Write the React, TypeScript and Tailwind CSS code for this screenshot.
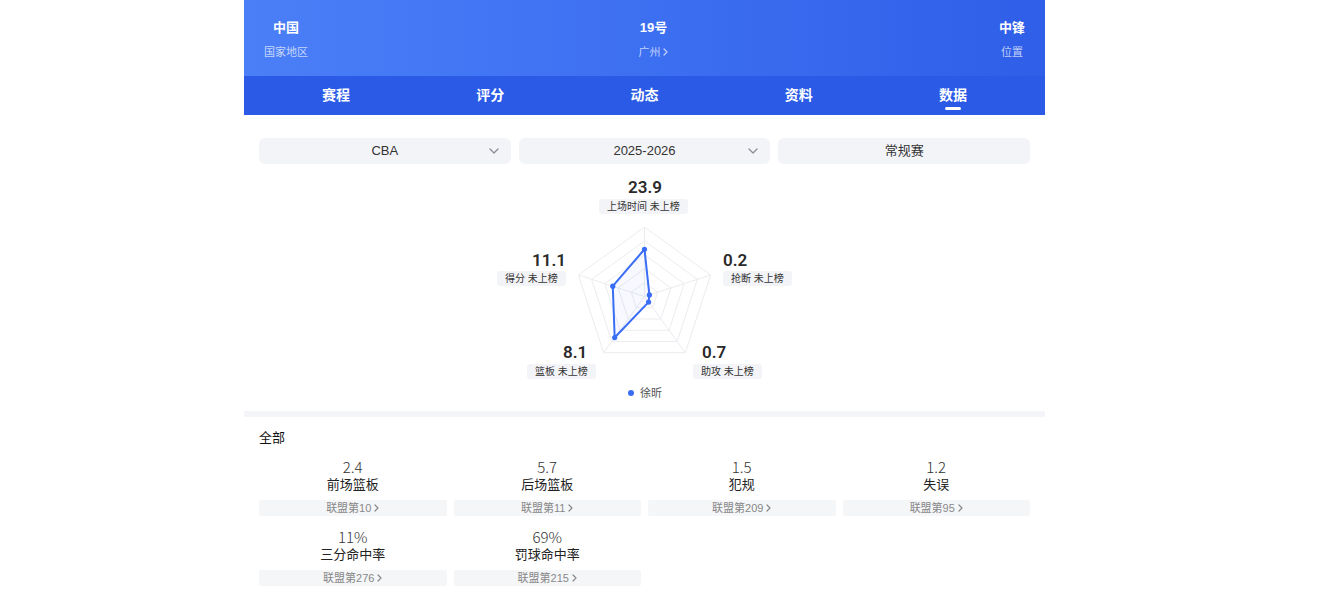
import React from "react";

const CX = 400.5;
const CY = 132.5;
const R = 69.5;

const vertex = (i: number, f: number): [number, number] => {
  const a = ((-90 + 72 * i) * Math.PI) / 180;
  return [CX + R * f * Math.cos(a), CY + R * f * Math.sin(a)];
};

const poly = (fs: number[]) => fs.map((f, i) => vertex(i, f).map((v) => v.toFixed(2)).join(",")).join(" ");

// share of each axis: 上场时间, 抢断, 助攻, 篮板, 得分
const player = [0.68, 0.074, 0.1, 0.73, 0.48];

const tabs = ["赛程", "评分", "动态", "资料", "数据"];

const stats = [
  { v: "2.4", n: "前场篮板", r: "联盟第10" },
  { v: "5.7", n: "后场篮板", r: "联盟第11" },
  { v: "1.5", n: "犯规", r: "联盟第209" },
  { v: "1.2", n: "失误", r: "联盟第95" },
  { v: "11%", n: "三分命中率", r: "联盟第276" },
  { v: "69%", n: "罚球命中率", r: "联盟第215" },
];

function Chevron() {
  return (
    <svg width="10" height="6" viewBox="0 0 10 6" className="absolute right-[12px] top-1/2 -translate-y-1/2">
      <path d="M1 1l4 4 4-4" fill="none" stroke="#8a8d96" strokeWidth="1.3" strokeLinecap="round" strokeLinejoin="round" />
    </svg>
  );
}

function Small() {
  return (
    <svg width="5" height="8" viewBox="0 0 5 8" className="ml-[3px]">
      <path d="M1 1l3 3-3 3" fill="none" stroke="currentColor" strokeWidth="1.2" strokeLinecap="round" strokeLinejoin="round" />
    </svg>
  );
}

function Tag({ text, className }: { text: string; className: string }) {
  return (
    <div className={`absolute h-[15px] px-2 rounded-[3px] bg-[#f3f4f8] text-[10px] leading-[15px] text-[#333] whitespace-nowrap ${className}`}>
      {text}
    </div>
  );
}

function Val({ text, className }: { text: string; className: string }) {
  return (
    <div className={`absolute text-[17px] leading-[17px] font-semibold text-[#2a2a2a] font-['Roboto',sans-serif] ${className}`}>
      {text}
    </div>
  );
}

export default function App() {
  return (
    <div className="min-h-[600px] bg-white font-['Liberation_Sans','Noto_Sans_CJK_SC',sans-serif]">
      <div className="w-[801px] ml-[244px]">
        {/* profile header */}
        <div className="h-[76px] px-5 flex justify-between bg-linear-to-r from-[#4b7ff7] via-[#3d6ff1] to-[#2f5ee8] text-white">
          <div className="flex flex-col items-center pt-[19px]">
            <div className="text-[13px] leading-[18px] font-bold">中国</div>
            <div className="mt-[7px] text-[11px] leading-[16px] text-white/70">国家地区</div>
          </div>
          <div className="flex flex-col items-center pt-[19px]">
            <div className="text-[13px] leading-[18px] font-bold">19号</div>
            <div className="mt-[7px] text-[11px] leading-[16px] text-white/70 flex items-center">
              广州
              <Small />
            </div>
          </div>
          <div className="flex flex-col items-center pt-[19px]">
            <div className="text-[13px] leading-[18px] font-bold">中锋</div>
            <div className="mt-[7px] text-[11px] leading-[16px] text-white/70">位置</div>
          </div>
        </div>

        {/* tabs */}
        <div className="h-[39px] px-[15px] grid grid-cols-5 bg-[#2b5be6]">
          {tabs.map((t, i) => (
            <div key={t} className="relative flex items-center justify-center text-[14px] font-bold text-white">
              {t}
              {i === 4 && <div className="absolute bottom-[5px] left-1/2 -translate-x-1/2 w-4 h-[3px] rounded-full bg-white" />}
            </div>
          ))}
        </div>

        {/* filters */}
        <div className="pt-[23px] px-[15px] grid grid-cols-3 gap-2">
          <div className="relative h-[26px] rounded-md bg-[#f3f4f8] flex items-center justify-center text-[13px] text-[#333]">
            CBA
            <Chevron />
          </div>
          <div className="relative h-[26px] rounded-md bg-[#f3f4f8] flex items-center justify-center text-[13px] text-[#333]">
            2025-2026
            <Chevron />
          </div>
          <div className="relative h-[26px] rounded-md bg-[#f3f4f8] flex items-center justify-center text-[13px] text-[#333]">
            常规赛
          </div>
        </div>

        {/* radar chart */}
        <div className="relative h-[247px]">
          <svg className="absolute inset-0" width="801" height="247" viewBox="0 0 801 247">
            {[0.2, 0.4, 0.6, 0.8, 1].map((f) => (
              <polygon key={f} points={poly([f, f, f, f, f])} fill="none" stroke="#ececf0" strokeWidth="1" />
            ))}
            {[0, 1, 2, 3, 4].map((i) => {
              const [x, y] = vertex(i, 1);
              return <line key={i} x1={CX} y1={CY} x2={x} y2={y} stroke="#ececf0" strokeWidth="1" />;
            })}
            <polygon points={poly(player)} fill="#3a6df5" fillOpacity="0.04" stroke="#3a6df5" strokeWidth="2" strokeLinejoin="round" />
            {player.map((f, i) => {
              const [x, y] = vertex(i, f);
              return <circle key={i} cx={x} cy={y} r="2.6" fill="#3a6df5" />;
            })}
          </svg>

          <Val text="23.9" className="left-[384px] top-[15px]" />
          <Tag text="上场时间 未上榜" className="left-[355px] top-[35px]" />

          <Val text="11.1" className="left-[288px] top-[88px]" />
          <Tag text="得分 未上榜" className="left-[253px] top-[107px]" />

          <Val text="0.2" className="left-[479px] top-[88px]" />
          <Tag text="抢断 未上榜" className="left-[479px] top-[107px]" />

          <Val text="8.1" className="left-[319px] top-[180px]" />
          <Tag text="篮板 未上榜" className="left-[283px] top-[200px]" />

          <Val text="0.7" className="left-[458px] top-[180px]" />
          <Tag text="助攻 未上榜" className="left-[449px] top-[200px]" />

          <div className="absolute left-[384px] top-[221px] flex items-center text-[11px] leading-[16px] text-[#555]">
            <span className="w-[6px] h-[6px] rounded-full bg-[#3a6df5] mr-[6px]" />
            徐昕
          </div>
        </div>

        <div className="h-[6px] bg-[#f4f5f9]" />

        {/* season totals */}
        <div className="px-[15px] pt-3 pb-4">
          <div className="text-[13px] leading-[18px] text-[#111]">全部</div>
          <div className="mt-[11px] grid grid-cols-4 gap-x-[7px] gap-y-3">
            {stats.map((s) => (
              <div key={s.n} className="flex flex-col items-center">
                <div className="text-[15px] leading-[18px] font-light text-[#333] font-['Noto_Sans_CJK_SC',sans-serif]">{s.v}</div>
                <div className="text-[13px] leading-[18px] text-[#222]">{s.n}</div>
                <div className="mt-[6px] w-full h-4 rounded-[2px] bg-[#f5f6f8] flex items-center justify-center text-[11px] text-[#888]">
                  {s.r}
                  <Small />
                </div>
              </div>
            ))}
          </div>
        </div>
      </div>
    </div>
  );
}
